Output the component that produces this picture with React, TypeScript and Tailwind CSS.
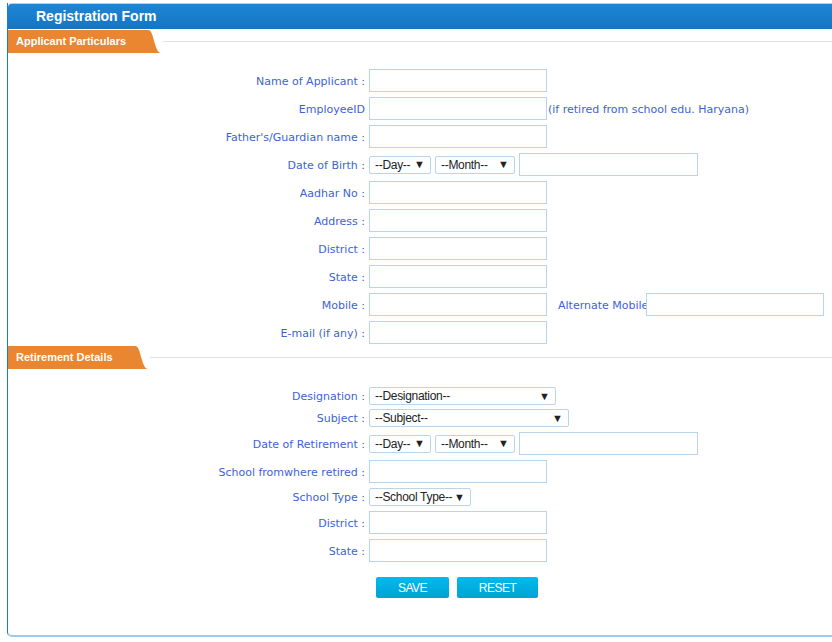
import React from "react";

const label = "text-[11px] leading-[13px] text-[#3b63d8] [font-family:'DejaVu_Sans',Verdana,sans-serif] whitespace-nowrap";

function TextBox({ w = "w-[178px]" }: { w?: string }) {
  return <div className={`${w} h-[23px] border border-[#b9d5ec] bg-white shrink-0`} />;
}

function Select({ text, w }: { text: string; w: string }) {
  return (
    <div
      className={`${w} h-[18px] border border-[#b9d5ec] rounded-[2px] bg-white flex items-center justify-between pl-[5px] pr-[5px] shrink-0 text-[12px] text-[#222] [font-family:'Liberation_Sans',Arial,sans-serif]`}
    >
      <span className="tracking-[-0.3px]">{text}</span>
      <span className="text-[11px] leading-none">▼</span>
    </div>
  );
}

function Row({
  name,
  colon = true,
  children,
}: {
  name: string;
  colon?: boolean;
  children: React.ReactNode;
}) {
  return (
    <div className="flex items-center">
      <div className={`w-[361px] shrink-0 text-right pr-[4px] pt-[1px] ${label}`}>
        {name}
        {colon ? " :" : ""}
      </div>
      {children}
    </div>
  );
}

function Tab({ title }: { title: string }) {
  return (
    <div className="flex items-center h-[23px]">
      <div className="flex h-full shrink-0">
        <div className="bg-[#e9862f] h-full flex items-center pl-[8px] pr-[18px] text-white text-[11px] font-bold [font-family:'Liberation_Sans',Arial,sans-serif]">
          {title}
        </div>
        <svg width="17" height="23" viewBox="0 0 17 23" className="block">
          <path d="M0 0 H4 C8 0 9 8 11 14 C13 21 15 23 17 23 H0 Z" fill="#e9862f" />
        </svg>
      </div>
      <div className="flex-1 h-px bg-[#e2e2e2] ml-[2px]" />
    </div>
  );
}

export default function App() {
  return (
    <div className="w-[832px] h-[642px] bg-white pl-[7px] pt-[3px] overflow-hidden">
      <div className="h-[634px] border-l border-[#1a7bd0] border-b-2 border-b-[#9fcbea] rounded-bl-[5px] flex flex-col">
        <div className="h-[26px] rounded-tl-[4px] border-t border-[#c9c9c9] bg-gradient-to-b from-[#1d86d6] to-[#1575c3] flex items-center pl-[28px] text-white text-[14px] font-bold [font-family:'Liberation_Sans',Arial,sans-serif]">
          Registration Form
        </div>
        <div className="mt-[1px]">
          <Tab title="Applicant Particulars" />
        </div>

        <div className="flex flex-col gap-[5px] mt-[16px]">
          <Row name="Name of Applicant">
            <TextBox />
          </Row>
          <Row name="EmployeeID" colon={false}>
            <TextBox />
            <span className={`${label} ml-[1px] pt-[1px]`}>(if retired from school edu. Haryana)</span>
          </Row>
          <Row name="Father's/Guardian name">
            <TextBox />
          </Row>
          <Row name="Date of Birth">
            <div className="flex items-center gap-[4px]">
              <Select text="--Day--" w="w-[62px]" />
              <Select text="--Month--" w="w-[80px]" />
              <TextBox w="w-[179px]" />
            </div>
          </Row>
          <Row name="Aadhar No">
            <TextBox />
          </Row>
          <Row name="Address">
            <TextBox />
          </Row>
          <Row name="District">
            <TextBox />
          </Row>
          <Row name="State">
            <TextBox />
          </Row>
          <Row name="Mobile">
            <TextBox />
            <span className={`${label} ml-[11px] pt-[1px]`}>Alternate Mobile</span>
            <TextBox w="w-[178px] -ml-[2px]" />
          </Row>
          <Row name="E-mail (if any)">
            <TextBox />
          </Row>
        </div>

        <div className="mt-[2px]">
          <Tab title="Retirement Details" />
        </div>

        <div className="flex flex-col gap-[5px] mt-[18px]">
          <div className="mb-[-1px]">
            <Row name="Designation">
              <Select text="--Designation--" w="w-[187px]" />
            </Row>
          </div>
          <Row name="Subject">
            <Select text="--Subject--" w="w-[200px]" />
          </Row>
          <Row name="Date of Retirement">
            <div className="flex items-center gap-[4px]">
              <Select text="--Day--" w="w-[62px]" />
              <Select text="--Month--" w="w-[80px]" />
              <TextBox w="w-[179px]" />
            </div>
          </Row>
          <Row name="School fromwhere retired">
            <TextBox />
          </Row>
          <Row name="School Type">
            <Select text="--School Type--" w="w-[102px]" />
          </Row>
          <Row name="District">
            <TextBox />
          </Row>
          <Row name="State">
            <TextBox />
          </Row>
        </div>

        <div className="flex gap-[8px] mt-[15px] pl-[368px]">
          <button className="w-[73px] h-[21px] rounded-[2px] bg-gradient-to-b from-[#00bbea] to-[#00a2d3] text-white text-[12px] tracking-[-0.5px] [font-family:'Liberation_Sans',Arial,sans-serif]">
            SAVE
          </button>
          <button className="w-[81px] h-[21px] rounded-[2px] bg-gradient-to-b from-[#00bbea] to-[#00a2d3] text-white text-[12px] tracking-[-0.5px] [font-family:'Liberation_Sans',Arial,sans-serif]">
            RESET
          </button>
        </div>
      </div>
    </div>
  );
}
